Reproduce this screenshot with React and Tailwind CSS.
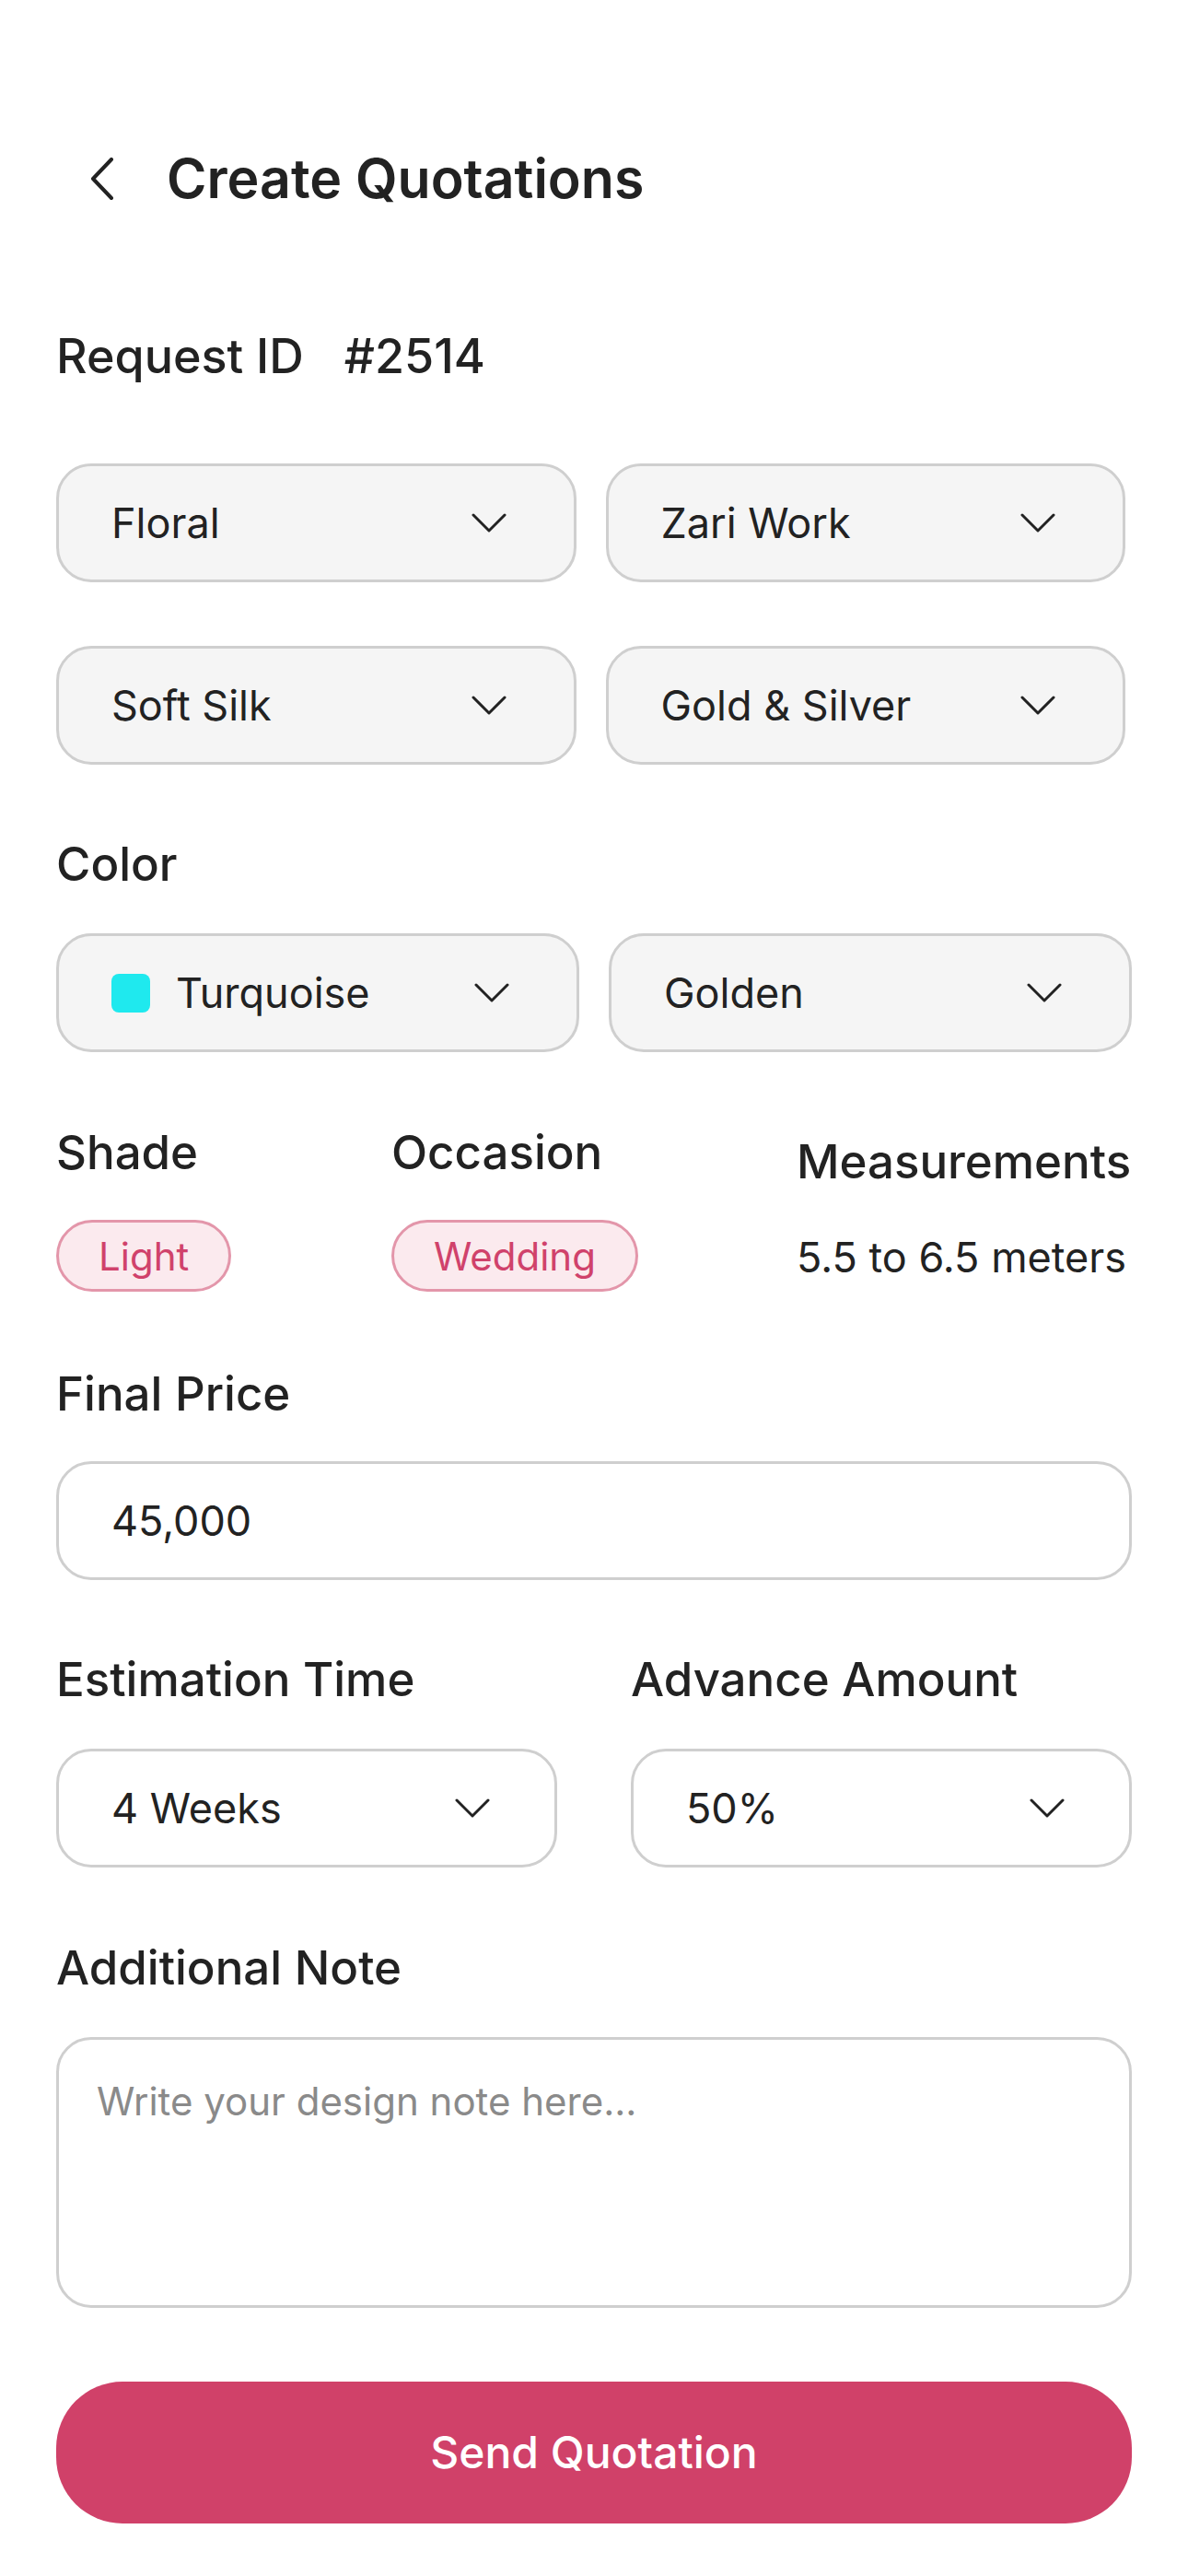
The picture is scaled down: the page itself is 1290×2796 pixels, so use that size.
import React from "react";

const Chevron = () => (
  <svg width="38" height="22" viewBox="0 0 38 22" fill="none" className="shrink-0">
    <path d="M2 2l17 17L36 2" stroke="#222" strokeWidth="3" strokeLinecap="round" strokeLinejoin="round" />
  </svg>
);

const Select = ({ value, filled = true, swatch, pr = "pr-[73px]" }) => (
  <div
    className={`h-[129px] rounded-[38px] border-[3px] border-[#cfcfcf] ${filled ? "bg-[#f5f5f5]" : "bg-white"} pl-[57px] ${pr} flex items-center justify-between`}
  >
    <div className="flex items-center gap-[28px]">
      {swatch && <span className="w-[42px] h-[42px] rounded-[8px] bg-[#1fe9ee]" />}
      <span className="text-[45px] leading-[50px] text-[#222]">{value}</span>
    </div>
    <Chevron />
  </div>
);

const Label = ({ children, className = "" }) => (
  <p className={`text-[51px] leading-[60px] font-medium text-[#222] ${className}`}>{children}</p>
);

const Chip = ({ children }) => (
  <span className="inline-flex h-[78px] items-center rounded-full border-[3px] border-[#e396aa] bg-[#fbeaee] px-[43px] text-[42px] text-[#d0426b]">
    {children}
  </span>
);

export default function App() {
  return (
    <div className="min-h-screen bg-white px-[61px] pb-[57px] font-['Inter',sans-serif] text-[#222]">
      {/* Header */}
      <div className="pt-[154px] pl-[37px] flex items-center h-[234px] gap-[57px]">
        <svg width="26" height="46" viewBox="0 0 26 46" fill="none">
          <path d="M23 2L3 23l20 21" stroke="#222" strokeWidth="4" strokeLinecap="round" strokeLinejoin="round" />
        </svg>
        <h1 className="text-[59px] leading-[80px] font-semibold">Create Quotations</h1>
      </div>

      {/* Request ID */}
      <div className="mt-[123px] flex gap-[44px] text-[52px] leading-[60px] font-medium">
        <span>Request ID</span>
        <span>#2514</span>
      </div>

      <div className="w-[1161px] mt-[86px] grid grid-cols-2 gap-x-[32px] gap-y-[69px]">
        <Select value="Floral" />
        <Select value="Zari Work" />
        <Select value="Soft Silk" />
        <Select value="Gold & Silver" />
      </div>

      <Label className="mt-[78px]">Color</Label>
      <div className="mt-[45px] grid grid-cols-2 gap-[32px]">
        <Select value="Turquoise" swatch />
        <Select value="Golden" />
      </div>

      {/* Shade / Occasion / Measurements */}
      <div className="mt-[79px] grid grid-cols-[364px_440px_1fr]">
        <div>
          <Label>Shade</Label>
          <div className="mt-[43px]">
            <Chip>Light</Chip>
          </div>
        </div>
        <div>
          <Label>Occasion</Label>
          <div className="mt-[43px]">
            <Chip>Wedding</Chip>
          </div>
        </div>
        <div className="pt-[10px]">
          <Label>Measurements</Label>
          <p className="mt-[44px] text-[45px] leading-[60px] whitespace-nowrap">5.5 to 6.5 meters</p>
        </div>
      </div>

      <Label className="mt-[81px]">Final Price</Label>
      <div className="mt-[43px] h-[129px] rounded-[38px] border-[3px] border-[#cfcfcf] bg-white pl-[57px] flex items-center text-[45px]">
        45,000
      </div>

      <div className="mt-[78px] grid grid-cols-2 gap-[80px]">
        <div>
          <Label>Estimation Time</Label>
          <div className="mt-[45px]">
            <Select value="4 Weeks" filled={false} pr="pr-[70px]" />
          </div>
        </div>
        <div>
          <Label>Advance Amount</Label>
          <div className="mt-[45px]">
            <Select value="50%" filled={false} pr="pr-[70px]" />
          </div>
        </div>
      </div>

      <Label className="mt-[79px]">Additional Note</Label>
      <div className="mt-[45px] h-[294px] rounded-[38px] border-[3px] border-[#cfcfcf] bg-white pl-[41px] pt-[42px] text-[42px] leading-[50px] text-[#8a8a8a]">
        Write your design note here...
      </div>

      <button className="mt-[80px] w-full h-[154px] rounded-[72px] bg-[#d04169] text-white text-[48px] font-medium">
        Send Quotation
      </button>
    </div>
  );
}
